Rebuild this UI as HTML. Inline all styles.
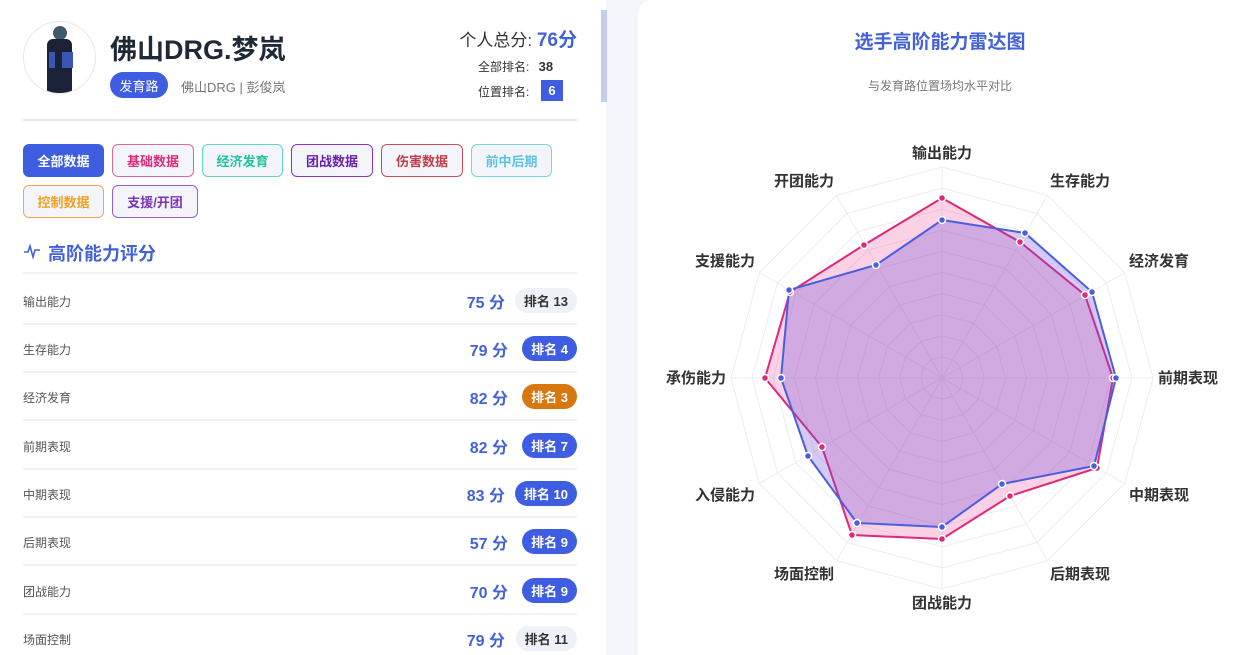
<!DOCTYPE html>
<html style="overflow:hidden;height:655px"><head><meta charset="utf-8"><style>
*{margin:0;padding:0;box-sizing:border-box}
body{width:1242px;height:655px;overflow:hidden;background:#f3f5fb;font-family:"Liberation Sans","Noto Sans CJK SC",sans-serif;position:relative}
.left{position:absolute;left:0;top:0;width:606px;height:655px;background:#fff}
.sb{position:absolute;left:601px;top:10px;width:6px;height:92px;background:#c5cbf3}
.right{position:absolute;left:638px;top:0;width:604px;height:655px;background:#fff;border-radius:14px 0 0 0}
.abs{position:absolute}
.tab{position:absolute;height:33px;border:1px solid;border-radius:6px;font-size:13px;font-weight:bold;display:flex;align-items:center;justify-content:center;background:#f3f5fb}
.row{position:absolute;left:23px;width:554px;height:48px;border-bottom:2px solid #f0f2f6}
.row .l{position:absolute;left:0;top:16px;font-size:12px;color:#555}
.row .s{position:absolute;top:12px;font-size:16px;font-weight:bold;color:#4462d8}
.row .b{position:absolute;right:0;top:11px;height:25px;border-radius:13px;font-size:13px;font-weight:bold;display:flex;align-items:center;justify-content:center;padding:0 9px}
.bl{background:#3f5de0;color:#fff}.gr{background:#eef1f8;color:#333}.or{background:#d9770f;color:#fff}
</style></head><body>
<div class="left">
 <div class="abs" style="left:23px;top:21px;width:73px;height:73px;border-radius:50%;border:1px solid #e6e6e6;overflow:hidden;background:#fff">
  <div class="abs" style="left:29px;top:4px;width:14px;height:14px;border-radius:50%;background:#3f5a6b"></div>
  <div class="abs" style="left:23px;top:17px;width:25px;height:56px;background:#1c2236;border-radius:6px 6px 0 0"></div>
  <div class="abs" style="left:38px;top:30px;width:11px;height:16px;background:#3b55b5"></div>
  <div class="abs" style="left:25px;top:30px;width:6px;height:16px;background:#3b55b5"></div>
 </div>
 <div class="abs" style="left:110px;top:28px;font-size:27px;font-weight:bold;color:#1f2937">佛山DRG.梦岚</div>
 <div class="abs" style="left:110px;top:72px;width:58px;height:26px;border-radius:13px;background:#3f5de0;color:#fff;font-size:13px;display:flex;align-items:center;justify-content:center">发育路</div>
 <div class="abs" style="left:181px;top:77px;font-size:13px;color:#777">佛山DRG | 彭俊岚</div>
 <div class="abs" style="right:29px;top:25px;font-size:17px;color:#333">个人总分: <b style="color:#4462d8;font-size:19px">76分</b></div>
 <div class="abs" style="left:478px;top:58px;font-size:12px;color:#333">全部排名: <b style="margin-left:6px;font-size:13px">38</b></div>
 <div class="abs" style="left:478px;top:83px;font-size:12px;color:#333">位置排名:</div>
 <div class="abs" style="left:541px;top:80px;width:22px;height:21px;background:#3f5de0;color:#fff;font-weight:bold;font-size:13px;display:flex;align-items:center;justify-content:center">6</div>
 <div class="abs" style="left:23px;top:119px;width:554px;height:2px;background:#e8eaee"></div>

 <div class="tab" style="left:23px;top:144px;width:81px;background:#3f5de0;border-color:#3f5de0;color:#fff">全部数据</div>
 <div class="tab" style="left:112px;top:144px;width:82px;border-color:#e0669a;color:#e02a7a">基础数据</div>
 <div class="tab" style="left:202px;top:144px;width:81px;border-color:#5fd4c0;color:#1ec3a0">经济发育</div>
 <div class="tab" style="left:291px;top:144px;width:82px;border-color:#8a35c8;color:#6a1fa8">团战数据</div>
 <div class="tab" style="left:381px;top:144px;width:82px;border-color:#c94f5a;color:#c23b48">伤害数据</div>
 <div class="tab" style="left:471px;top:144px;width:81px;border-color:#7ad3e6;color:#5cc3e0">前中后期</div>
 <div class="tab" style="left:23px;top:185px;width:81px;border-color:#f2a84a;color:#f0a020">控制数据</div>
 <div class="tab" style="left:112px;top:185px;width:86px;border-color:#9a5cd0;color:#7a35b8">支援/开团</div>

 <svg class="abs" style="left:23px;top:243px" width="18" height="16"><path d="M1 9 L5 9 L7 3 L10 14 L12 7 L17 7" fill="none" stroke="#4462d8" stroke-width="1.6"/></svg>
 <div class="abs" style="left:48px;top:240px;font-size:18px;font-weight:bold;color:#4462d8">高阶能力评分</div>
 <div class="abs" style="left:23px;top:272px;width:554px;height:2px;background:#f0f2f6"></div>

 <div class="row" style="top:277px"><span class="l">输出能力</span><span class="s" style="right:72px">75 分</span><span class="b gr">排名 13</span></div>
 <div class="row" style="top:325px"><span class="l">生存能力</span><span class="s" style="right:69px">79 分</span><span class="b bl">排名 4</span></div>
 <div class="row" style="top:373px"><span class="l">经济发育</span><span class="s" style="right:69px">82 分</span><span class="b or">排名 3</span></div>
 <div class="row" style="top:422px"><span class="l">前期表现</span><span class="s" style="right:69px">82 分</span><span class="b bl">排名 7</span></div>
 <div class="row" style="top:470px"><span class="l">中期表现</span><span class="s" style="right:72px">83 分</span><span class="b bl">排名 10</span></div>
 <div class="row" style="top:518px"><span class="l">后期表现</span><span class="s" style="right:69px">57 分</span><span class="b bl">排名 9</span></div>
 <div class="row" style="top:567px"><span class="l">团战能力</span><span class="s" style="right:69px">70 分</span><span class="b bl">排名 9</span></div>
 <div class="row" style="top:615px;border:0"><span class="l">场面控制</span><span class="s" style="right:72px">79 分</span><span class="b gr">排名 11</span></div>
</div>
<div class="sb"></div>
<div class="right">
 <div class="abs" style="left:0;width:604px;top:27px;text-align:center;font-size:19px;font-weight:bold;color:#4462d8">选手高阶能力雷达图</div>
 <div class="abs" style="left:0;width:604px;top:77px;text-align:center;font-size:12px;color:#777">与发育路位置场均水平对比</div>
</div>
<svg class="abs" style="left:0;top:0" width="1242" height="655">
<g id="grid" fill="none" stroke="#ececef" stroke-width="1"></g>
<polygon points="942,198 1020,242 1085,295 1113,378 1097,468 1010,496 942,539 852,535 822,447 765,378 790,292 864,245" fill="rgba(236,72,153,0.25)" stroke="#e0287a" stroke-width="2"/>
<polygon points="942,220 1025,233 1092,292 1116,378 1094,466 1002,484 942,527 857,523 808,456 781,378 789,290 876,265" fill="rgba(115,80,215,0.3)" stroke="#4a5ee0" stroke-width="2"/>
<g id="dots"></g>
<g font-size="15" font-weight="bold" fill="#333" text-anchor="middle" font-family="Liberation Sans,Noto Sans CJK SC,sans-serif">
<text x="942" y="158">输出能力</text><text x="1080" y="186">生存能力</text><text x="1159" y="266">经济发育</text><text x="1188" y="383">前期表现</text>
<text x="1159" y="500">中期表现</text><text x="1080" y="579">后期表现</text><text x="942" y="608">团战能力</text><text x="804" y="579">场面控制</text>
<text x="725" y="500">入侵能力</text><text x="696" y="383">承伤能力</text><text x="725" y="266">支援能力</text><text x="804" y="186">开团能力</text>
</g>
</svg>
<script>
var g=document.getElementById('grid'),cx=942,cy=378,R=211,s='';
for(var k=1;k<=10;k++){var r=R*k/10,p=[];for(var i=0;i<12;i++){var a=i*Math.PI/6;p.push((cx+r*Math.sin(a)).toFixed(1)+','+(cy-r*Math.cos(a)).toFixed(1));}s+='<polygon points="'+p.join(' ')+'"/>';}
for(var i=0;i<12;i++){var a=i*Math.PI/6;s+='<line x1="'+cx+'" y1="'+cy+'" x2="'+(cx+R*Math.sin(a))+'" y2="'+(cy-R*Math.cos(a))+'"/>';}
g.innerHTML=s;
var d='',P=document.querySelectorAll('svg polygon[stroke-width="2"]');
P.forEach(function(pg){var c=pg.getAttribute('stroke');pg.getAttribute('points').split(' ').forEach(function(q){var xy=q.split(',');d+='<circle cx="'+xy[0]+'" cy="'+xy[1]+'" r="3.5" fill="'+c+'" stroke="#fff" stroke-width="1.5"/>';});});
document.getElementById('dots').innerHTML=d;
</script>
</body></html>
